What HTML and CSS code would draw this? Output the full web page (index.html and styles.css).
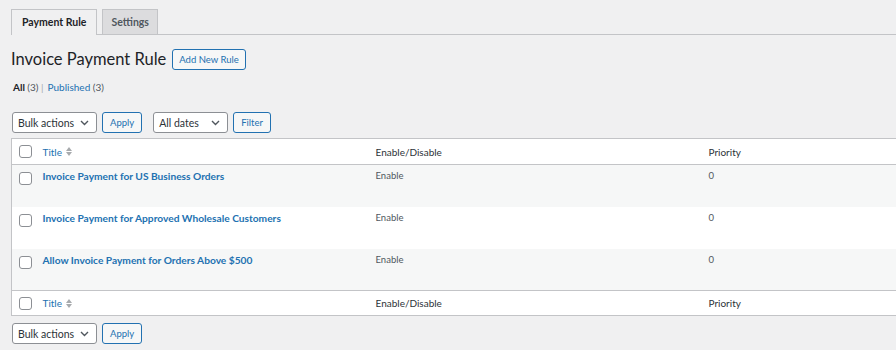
FILE: index.html
```html
<!DOCTYPE html>
<html lang="en">
<head>
  <meta charset="UTF-8">
  <title>Invoice Payment Rule</title>
  <link rel="stylesheet" href="styles.css">
</head>
<body>
  <div class="wrap">
    <!-- Tabs -->
    <nav class="tabs">
      <a href="#" class="tab active">Payment Rule</a>
      <a href="#" class="tab">Settings</a>
    </nav>

    <div class="heading">
      <h1>Invoice Payment Rule</h1>
      <a href="#" class="btn">Add New Rule</a>
    </div>

    <ul class="views">
      <li><a href="#" class="current">All <span class="count">(3)</span></a> |</li>
      <li><a href="#">Published <span class="count">(3)</span></a></li>
    </ul>

    <!-- Top bar -->
    <div class="tablenav">
      <div class="select" style="width: 85px">Bulk actions
        <svg width="9" height="6" viewBox="0 0 9 6"><path d="M1 1l3.5 3.5L8 1" fill="none" stroke="#50575e" stroke-width="1.4"/></svg>
      </div>
      <a href="#" class="btn small">Apply</a>
      <div class="select dates" style="width: 75px">All dates
        <svg width="9" height="6" viewBox="0 0 9 6"><path d="M1 1l3.5 3.5L8 1" fill="none" stroke="#50575e" stroke-width="1.4"/></svg>
      </div>
      <a href="#" class="btn small">Filter</a>
    </div>

    <table class="list">
      <colgroup>
        <col style="width: 31px">
        <col style="width: 333px">
        <col style="width: 333px">
        <col>
      </colgroup>
      <thead>
        <tr>
          <th class="check"><span class="cb"></span></th>
          <th><a href="#" class="sort">Title <span class="arrows"><i class="up"></i><i class="down"></i></span></a></th>
          <th>Enable/Disable</th>
          <th>Priority</th>
        </tr>
      </thead>
      <tbody>
        <tr class="alt">
          <td class="check"><span class="cb"></span></td>
          <td><a href="#" class="row-title">Invoice Payment for US Business Orders</a></td>
          <td>Enable</td>
          <td>0</td>
        </tr>
        <tr>
          <td class="check"><span class="cb"></span></td>
          <td><a href="#" class="row-title">Invoice Payment for Approved Wholesale Customers</a></td>
          <td>Enable</td>
          <td>0</td>
        </tr>
        <tr class="alt">
          <td class="check"><span class="cb"></span></td>
          <td><a href="#" class="row-title">Allow Invoice Payment for Orders Above $500</a></td>
          <td>Enable</td>
          <td>0</td>
        </tr>
      </tbody>
      <tfoot>
        <tr>
          <th class="check"><span class="cb"></span></th>
          <th><a href="#" class="sort">Title <span class="arrows"><i class="up"></i><i class="down"></i></span></a></th>
          <th>Enable/Disable</th>
          <th>Priority</th>
        </tr>
      </tfoot>
    </table>

    <!-- Bottom bar -->
    <div class="tablenav bottom">
      <div class="select" style="width: 85px">Bulk actions
        <svg width="9" height="6" viewBox="0 0 9 6"><path d="M1 1l3.5 3.5L8 1" fill="none" stroke="#50575e" stroke-width="1.4"/></svg>
      </div>
      <a href="#" class="btn small">Apply</a>
    </div>
  </div>
</body>
</html>
```

FILE: styles.css
```css
body {
  margin: 0;
  background: #f0f0f1;
  font-family: Lato, "Open Sans", Arial, sans-serif;
  font-size: 11px;
  color: #3c434a;
  overflow: hidden;
}
a {
  text-decoration: none;
  color: #2271b1;
}
.wrap {
  padding: 9px 0 0 11px;
}

/* tabs */
.tabs {
  display: flex;
  border-bottom: 1px solid #c3c4c7;
  height: 25px;
}
.tab {
  display: block;
  height: 24px;
  line-height: 24px;
  padding: 0 8px;
  margin-right: 5px;
  border: 1px solid #c3c4c7;
  border-bottom: none;
  background: #dcdcde;
  color: #50575e;
  font-size: 10.5px;
  font-weight: 700;
}
.tab.active {
  background: #f0f0f1;
  color: #1d2327;
  height: 25px;
  padding: 0 10px;
}

/* heading */
.heading {
  display: flex;
  align-items: center;
  gap: 6px;
  margin-top: 13px;
}
h1 {
  margin: 0;
  font-size: 16.5px;
  font-weight: 400;
  color: #1d2327;
  line-height: 22px;
}
.btn {
  display: inline-block;
  height: 19px;
  line-height: 19px;
  padding: 0 6px;
  border: 1px solid #2271b1;
  border-radius: 3px;
  background: #f6f7f7;
  color: #2271b1;
  font-size: 9.5px;
}
.views {
  list-style: none;
  margin: 11px 0 0 2px;
  padding: 0;
  display: flex;
  gap: 4px;
  font-size: 10px;
  color: #a7aaad;
}
.views .current {
  color: #1d2327;
  font-weight: 700;
}
.views .count {
  color: #50575e;
  font-weight: 400;
}

/* table nav */
.tablenav {
  display: flex;
  align-items: center;
  gap: 5px;
  margin: 19px 0 0 1px;
  height: 21px;
}
.tablenav.bottom {
  margin-top: 7px;
}
.select {
  box-sizing: border-box;
  height: 21px;
  display: flex;
  align-items: center;
  justify-content: space-between;
  padding: 0 7px 0 5px;
  background: #fff;
  border: 1px solid #8c8f94;
  border-radius: 3px;
  color: #2c3338;
  font-size: 10.5px;
}
.select.dates {
  margin-left: 6px;
}
.btn.small {
  padding: 0 7px;
}

/* table */
.list {
  margin-top: 5px;
  width: 1000px;
  border-collapse: collapse;
  table-layout: fixed;
  background: #fff;
  border: 1px solid #c3c4c7;
}
.list th,
.list td {
  padding: 0;
  text-align: left;
  vertical-align: top;
  font-weight: 400;
}
.list thead th,
.list tfoot th {
  height: 25px;
  vertical-align: middle;
  font-size: 10px;
  color: #2c3338;
}
.list tfoot th {
  height: 24px;
}
.list thead tr {
  border-bottom: 1px solid #c3c4c7;
}
.list tfoot tr {
  border-top: 1px solid #c3c4c7;
}
.list tbody td {
  height: 42px;
  padding-top: 5px;
  box-sizing: border-box;
  font-size: 9.5px;
  color: #50575e;
}
.list tbody tr.alt {
  background: #f6f7f7;
}
.check {
  padding-left: 7px !important;
}
.list tbody .check {
  padding-top: 7px;
}
.cb {
  display: block;
  box-sizing: border-box;
  width: 13px;
  height: 13px;
  border: 1px solid #8c8f94;
  border-radius: 3px;
  background: #fff;
}
.row-title {
  font-weight: 700;
  font-size: 10.2px;
}
.sort {
  display: inline-flex;
  align-items: center;
  gap: 4px;
}
.arrows {
  display: inline-flex;
  flex-direction: column;
  gap: 1px;
}
.arrows i {
  width: 0;
  height: 0;
  border-left: 3px solid transparent;
  border-right: 3px solid transparent;
}
.arrows .up {
  border-bottom: 4px solid #a7aaad;
}
.arrows .down {
  border-top: 4px solid #a7aaad;
}
```
